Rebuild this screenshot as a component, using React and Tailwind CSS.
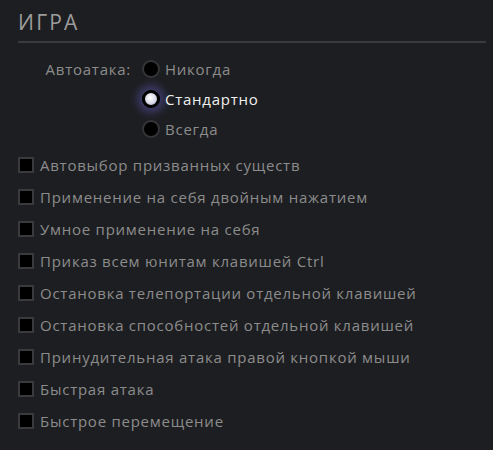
import React from "react";

const checks = [
  "Автовыбор призванных существ",
  "Применение на себя двойным нажатием",
  "Умное применение на себя",
  "Приказ всем юнитам клавишей Ctrl",
  "Остановка телепортации отдельной клавишей",
  "Остановка способностей отдельной клавишей",
  "Принудительная атака правой кнопкой мыши",
  "Быстрая атака",
  "Быстрое перемещение",
];

function Radio({ checked, label, showLabel }) {
  return (
    <div className="flex items-center h-[30px]">
      <div className="w-[124px] text-right pr-[11px] text-[#8c8c8c]">{showLabel ? "Автоатака:" : ""}</div>
      {checked ? (
        <div className="w-[18px] h-[18px] rounded-full border-[3px] border-black bg-[radial-gradient(circle_at_45%_40%,#ffffff_0%,#d8d8e8_55%,#a8a8c0_100%)] shadow-[0_0_9px_5px_rgba(100,90,190,0.45)]" />
      ) : (
        <div className="w-[18px] h-[18px] rounded-full border-2 border-[#353538] bg-black" />
      )}
      <span className={"ml-[5px] " + (checked ? "text-[#f0f0f0]" : "text-[#8c8c8c]")}>{label}</span>
    </div>
  );
}

export default function App() {
  return (
    <div
      className="w-[493px] h-[450px] bg-[#1d1e21] pl-[18px] pr-[7px] pt-[8px] text-[15px] tracking-[0.75px]"
      style={{ fontFamily: '"Open Sans", "DejaVu Sans", sans-serif' }}
    >
      <h1 className="text-[21px] leading-[28px] tracking-[2.2px] text-[#9c9c9c]">ИГРА</h1>
      <div className="h-[2px] bg-[#3a3b3f] mt-[5px]" />
      <div className="mt-[11px]">
        <Radio showLabel label="Никогда" />
        <Radio checked label="Стандартно" />
        <Radio label="Всегда" />
      </div>
      <div className="mt-[5px]">
        {checks.map((c) => (
          <div key={c} className="flex items-center h-[32px]">
            <div className="w-[16px] h-[16px] border-2 border-[#3a3a3c] bg-black" />
            <span className="ml-[6px] text-[#8c8c8c]">{c}</span>
          </div>
        ))}
      </div>
    </div>
  );
}
